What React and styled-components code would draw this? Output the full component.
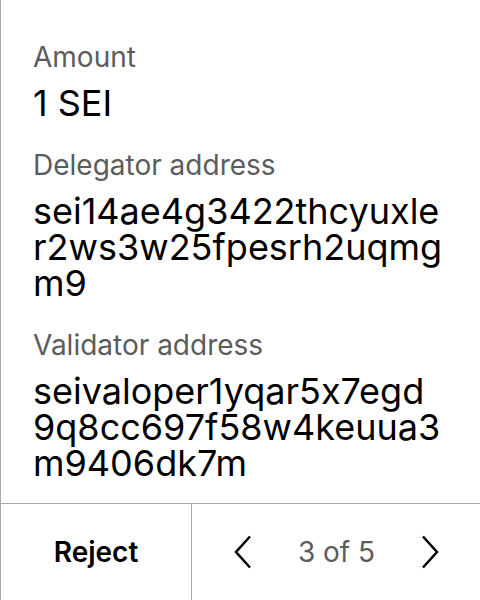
import styled, { createGlobalStyle } from 'styled-components'

const GlobalStyle = createGlobalStyle`
    html, body {
        margin: 0;
        padding: 0;
        background: #ffffff;
    }
    body {
        font-family: Inter, 'Noto Sans', sans-serif;
        font-feature-settings: 'calt' 0;
    }
`

const Screen = styled.div`
    width: 480px;
    height: 600px;
    box-sizing: border-box;
    border-left: 1px solid #a8a8a8;
    display: flex;
    flex-direction: column;
    background: #ffffff;
`

const Content = styled.div`
    flex: 1;
    padding: 41px 37px 0 32px;
    display: flex;
    flex-direction: column;
    gap: 28px;
`

const Field = styled.div`
    display: flex;
    flex-direction: column;
    gap: 12px;
`

const Label = styled.div`
    font-size: 28px;
    line-height: 32px;
    color: #5c5c5c;
`

const Value = styled.div`
    font-size: 36px;
    line-height: 36px;
    color: #000000;
    word-break: break-all;
`

const Footer = styled.div`
    height: 96px;
    border-top: 1px solid #a8a8a8;
    display: grid;
    grid-template-columns: 191px 1fr;
`

const RejectButton = styled.button`
    border: none;
    border-right: 1px solid #a8a8a8;
    background: transparent;
    font-family: Inter, sans-serif;
    font-size: 28px;
    font-weight: 600;
    color: #000000;
    padding: 0;
`

const Pager = styled.div`
    display: flex;
    align-items: center;
    justify-content: space-between;
    padding: 0 34px 0 35px;
`

const NavButton = styled.button`
    border: none;
    background: transparent;
    padding: 0;
    display: flex;
    align-items: center;
    justify-content: center;
    width: 32px;
    height: 40px;
`

const PageText = styled.div`
    font-size: 28px;
    color: #5c5c5c;
`

const Chevron = ({ dir }) => (
    <svg width="18" height="34" viewBox="0 0 18 34" fill="none">
        <path
            d={dir === 'left' ? 'M16 1.5 L2 17 L16 32.5' : 'M2 1.5 L16 17 L2 32.5'}
            stroke="#000"
            strokeWidth="2.5"
        />
    </svg>
)

const fields = [
    { label: 'Amount', value: '1 SEI' },
    {
        label: 'Delegator address',
        value: 'sei14ae4g3422thcyuxler2ws3w25fpesrh2uqmgm9',
    },
    {
        label: 'Validator address',
        value: 'seivaloper1yqar5x7egd9q8cc697f58w4keuua3m9406dk7m',
    },
]

export default function App() {
    return (
        <>
            <GlobalStyle />
            <Screen>
                <Content>
                    {fields.map((f) => (
                        <Field key={f.label}>
                            <Label>{f.label}</Label>
                            <Value>{f.value}</Value>
                        </Field>
                    ))}
                </Content>
                <Footer>
                    <RejectButton>Reject</RejectButton>
                    <Pager>
                        <NavButton>
                            <Chevron dir="left" />
                        </NavButton>
                        <PageText>3 of 5</PageText>
                        <NavButton>
                            <Chevron dir="right" />
                        </NavButton>
                    </Pager>
                </Footer>
            </Screen>
        </>
    )
}
